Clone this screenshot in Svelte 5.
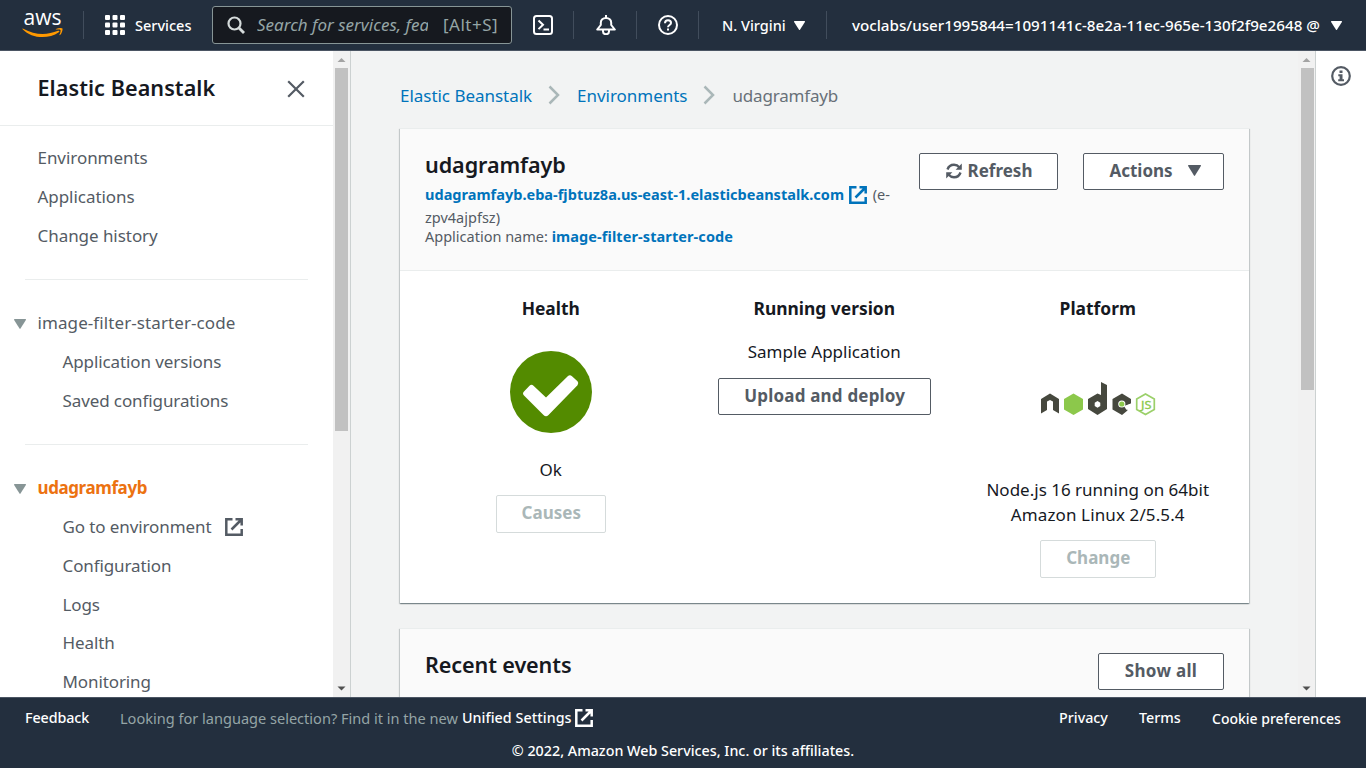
<script>
  const top = ['Environments', 'Applications', 'Change history'];
  const app = ['Application versions', 'Saved configurations'];
  const env = ['Configuration', 'Logs', 'Health', 'Monitoring'];
</script>

{#snippet external(size)}
  <svg class="ext" width={size} height={size} viewBox="0 0 18 18" fill="none" stroke="currentColor" stroke-width="2.500">
    <path d="M7.500 1.300H1.300v15.400h15.400v-5.700M10.500 1.300h6.200v6.200M16.500 1.500 6.500 11.500" />
  </svg>
{/snippet}

{#snippet scrollbar(thumb)}
  <div class="scroll">
    <svg width="17" height="17"><path d="M4.500 11 8.500 7l4 4z" fill="#a3a3a3" /></svg>
    <div class="thumb" style="height:{thumb}px"></div>
    <svg class="down" width="17" height="17"><path d="M4.500 6.500h8l-4 4z" fill="#505050" /></svg>
  </div>
{/snippet}

{#snippet caret(w, h)}
  <svg width={w} height={h} viewBox="0 0 12 10" preserveAspectRatio="none"><path d="M.5 0h11q.7.3.4 1L6.500 9.600q-.5.6-1 0L.1 1Q-.1.2.5 0z" fill="currentColor" /></svg>
{/snippet}

<div class="page">
  <header>
    <div class="aws">
      <span>aws</span>
      <svg width="41" height="11" viewBox="0 0 41 11">
        <path d="M.6 1.200Q0 .3 1.300.7C13 7.300 25 7.400 36 2.800c1.300-.5 2 .5.8 1.400C26 11.700 9.500 10.500.6 1.200z" fill="#f90" />
        <path d="M34 .9c2.500-1.200 6-1 6.400-.4.5.8-.2 4.700-2.300 6.500-.5.3-.8.1-.6-.4.700-1.700 1.400-4 .9-4.700s-2.700-.4-4.200-.3c-.6 0-.6-.4-.2-.7z" fill="#f90" />
      </svg>
    </div>
    <i class="sep s1"></i>
    <div class="services">
      <svg width="20" height="20" fill="#fff">
        {#each [0, 7.500, 15] as y}{#each [0, 7.500, 15] as x}<rect {x} {y} width="5" height="5" rx="1" />{/each}{/each}
      </svg>
      <span>Services</span>
    </div>
    <div class="search">
      <svg width="18" height="18" viewBox="0 0 18 18" fill="none" stroke="#d5dbdb"><circle cx="7.500" cy="7.500" r="6" stroke-width="2.200" /><path d="m12 12 5 5" stroke-width="2.800" /></svg>
      <span class="ph">Search for services, fea</span>
      <span class="key">[Alt+S]</span>
    </div>
    <div class="tool shell">
      <svg width="20" height="20" viewBox="0 0 20 20" fill="none" stroke="#fff" stroke-width="2"><rect x="1" y="1" width="18" height="18" rx="2.500" /><path d="m5.500 5.500 4.500 4.300-4.500 4.300M10.500 14.500h5.500" /></svg>
    </div>
    <i class="sep"></i>
    <div class="tool bell">
      <svg width="20" height="20" viewBox="0 0 20 20" fill="none" stroke="#fff" stroke-width="2" stroke-linejoin="round"><path d="M10 0v3M1.200 14.500 4.800 10V7.800C4.800 5 7 3 10 3s5.200 2 5.200 4.800V10l3.600 4.500zM7 15v1.500a3 2.700 0 0 0 6 0V15" /></svg>
    </div>
    <i class="sep"></i>
    <div class="tool help">
      <svg width="20" height="20" viewBox="0 0 20 20" fill="none" stroke="#fff" stroke-width="2"><circle cx="10" cy="10" r="9" /><path d="M7 8.200C7 6.300 8.200 5.300 10 5.300s3 1 3 2.700c0 2-3 2-3 4.300M10 13.500v2" /></svg>
    </div>
    <i class="sep"></i>
    <div class="region"><span>N. Virgini</span>{@render caret(11, 9)}</div>
    <i class="sep"></i>
    <div class="user"><span>voclabs/user1995844=1091141c-8e2a-11ec-965e-130f2f9e2648 @</span>{@render caret(11, 9)}</div>
  </header>

  <div class="body">
    <aside>
      <div class="nav">
        <div class="navhead">
          <h2>Elastic Beanstalk</h2>
          <svg width="18" height="18" stroke="#545b64" stroke-width="2.200"><path d="m1.200 1.200 15.600 15.600M16.800 1.200 1.200 16.800" /></svg>
        </div>
        <ul>{#each top as t}<li>{t}</li>{/each}</ul>
        <hr />
        <ul>
          <li class="group">{@render caret(12, 10)}<span class="wide">image-filter-starter-code</span></li>
          {#each app as t}<li class="sub">{t}</li>{/each}
        </ul>
        <hr />
        <ul>
          <li class="group">{@render caret(12, 10)}<span class="active">udagramfayb</span></li>
          <li class="sub">Go to environment {@render external(18)}</li>
          {#each env as t}<li class="sub">{t}</li>{/each}
        </ul>
      </div>
      {@render scrollbar(363)}
    </aside>

    <main>
      <div class="content">
        <nav class="crumbs">
          <span class="link">Elastic Beanstalk</span>
          <svg width="12" height="20" fill="none" stroke="#aab7b8" stroke-width="2.500"><path d="m1.500 1.500 8.500 8.500-8.500 8.500" /></svg>
          <span class="link">Environments</span>
          <svg width="12" height="20" fill="none" stroke="#aab7b8" stroke-width="2.500"><path d="m1.500 1.500 8.500 8.500-8.500 8.500" /></svg>
          <span class="here">udagramfayb</span>
        </nav>

        <section class="card">
          <div class="cardhead">
            <div class="info">
              <h2>udagramfayb</h2>
              <p class="url"><b>udagramfayb.eba-fjbtuz8a.us-east-1.elasticbeanstalk.com</b> <span class="blue">{@render external(18)}</span> (e-<br />zpv4ajpfsz)</p>
              <p class="appname">Application name: <b>image-filter-starter-code</b></p>
            </div>
            <div class="btns">
              <button class="refresh">
                <svg width="16" height="16" viewBox="0 0 16 16" fill="none" stroke="currentColor" stroke-width="2.400"><path d="M1.500 6.500C2.500 3.500 5 1.800 8 1.800c2.200 0 4 .9 5.500 2.700M14.500 9.500c-1 3-3.500 4.700-6.500 4.700-2.200 0-4-.9-5.500-2.700" /><path d="M15.800.5v6.200H9.600zM.2 15.500V9.300h6.200z" fill="currentColor" stroke="none" /></svg>
                Refresh
              </button>
              <button class="actions">Actions {@render caret(13, 11)}</button>
            </div>
          </div>
          <div class="cols">
            <div class="col">
              <h3>Health</h3>
              <svg class="ok" width="82" height="82" viewBox="0 0 82 82"><circle cx="41" cy="41" r="41" fill="#538b00" /><path d="M23.500 34.800 36 46.500 58 25q2-1.800 4 .2l5.500 5q1.800 2 0 4L38.500 64q-2.500 2.400-5 0L14 44.500q-2-2 0-4l5.500-5.700q2-1.900 4 0z" fill="#fff" /></svg>
              <p class="oktxt">Ok</p>
              <button class="off causes">Causes</button>
            </div>
            <div class="col">
              <h3>Running version</h3>
              <p class="sample">Sample Application</p>
              <button class="deploy">Upload and deploy</button>
            </div>
            <div class="col">
              <h3>Platform</h3>
              <svg class="node" width="116" height="34" viewBox="0 0 116 34">
                <g fill="#46483e">
                  <path d="M1 17 10 11.500 19 17v14.500L13 28v-8.500L10 18l-3 1.500V28l-6 3.500z" />
                  <path fill-rule="evenodd" d="M61 0l6 3v24l-9.500 6L48 27V17l9.500-5.500L61 13zM57.500 19 54.700 20.700v3.300l2.800 1.700 2.800-1.700v-3.300z" />
                  <path d="M82 11.500 91 17v4.500L86 24l1.500 4.500L82 33l-9.500-5.500V17z" />
                </g>
                <path d="m33.500 11.500 9.500 5.500v10.500L33.500 33 24 27.500V17z" fill="#8cc84b" />
                <path d="m84 24 7-2.500-4.500 6.500z" fill="#fff" />
                <circle cx="81.800" cy="22" r="3.600" fill="#fff" /><circle cx="81.800" cy="22" r="2.600" fill="#8cc84b" />
                <path d="m105.500 12 8.800 5v10.500l-8.800 5-8.800-5V17z" fill="none" stroke="#9bd06a" stroke-width="1.700" />
                <text x="101" y="26.500" fill="#8cc84b" stroke="#8cc84b" stroke-width=".3" font-size="11" textLength="10.500" lengthAdjust="spacingAndGlyphs">JS</text>
              </svg>
              <p class="plat">Node.js 16 running on 64bit<br /><span>Amazon Linux 2/5.5.4</span></p>
              <button class="off change">Change</button>
            </div>
          </div>
        </section>

        <section class="card second">
          <div class="eventhead"><h2>Recent events</h2><button class="showall">Show all</button></div>
        </section>
      </div>
      {@render scrollbar(322)}
    </main>

    <div class="rail">
      <svg width="20" height="20" viewBox="0 0 20 20"><circle cx="10" cy="10" r="8.800" fill="none" stroke="#545b64" stroke-width="2.200" /><path d="M8.500 4.500h3v2.600h-3zM7.300 8.300h4.200v5h1.500v2H7.200v-2h1.400v-3H7.300z" fill="#545b64" /></svg>
    </div>
  </div>

  <footer>
    <div class="frow">
      <span class="feedback">Feedback</span>
      <span class="look">Looking for language selection? Find it in the new</span>
      <span class="unified">Unified Settings</span>
      {@render external(18)}
      <span class="privacy">Privacy</span>
      <span class="terms">Terms</span>
      <span class="cookie">Cookie preferences</span>
    </div>
    <div class="copy">© 2022, Amazon Web Services, Inc. or its affiliates.</div>
  </footer>
</div>

<style>
  :global(body) { margin: 0; overflow: hidden; }
  * { box-sizing: border-box; }
  .page { display: flex; flex-direction: column; width: 1366px; height: 768px; overflow: hidden; font: 17px/24px "Noto Sans", sans-serif; color: #16191f; background: #fff; }
  svg { display: block; flex: none; }
  h2, h3, p, ul { margin: 0; padding: 0; }
  h2 { font-size: 21.6px; font-weight: 600; line-height: 28px; }
  h3 { font-size: 17.4px; font-weight: 700; line-height: 24px; }

  header { flex: none; height: 51px; display: flex; align-items: center; background: #232f3e; border-bottom: 1px solid #4b5563; color: #fff; font-size: 14.5px; white-space: nowrap; }
  header span, footer { font-weight: 500; }
  .aws { width: 41px; margin-left: 22px; display: flex; flex-direction: column; align-items: center; }
  .aws span { font: 500 21px/17px "Open Sans", sans-serif; height: 18px; margin-top: -2px; margin-bottom: 1px; }
  .sep { flex: none; width: 1px; height: 28px; background: #414d5c; }
  .s1 { margin-left: 20px; }
  .services { display: flex; align-items: center; gap: 10px; width: 128px; padding-left: 21px; }
  .search { display: flex; align-items: center; width: 300px; height: 38px; border: 1px solid #879596; border-radius: 3px; background: #16191f; padding-left: 14px; color: #95a5a6; font-size: 17px; }
  header .ph { font-style: italic; font-weight: 400; width: 171px; margin-left: 12px; overflow: hidden; }
  header .key { margin-left: 15px; letter-spacing: .5px; font-weight: 400; }
  .tool { width: 62px; display: grid; place-items: center; }
  .shell { width: 61px; }
  .bell { padding-left: 2px; }
  .help { width: 61px; }
  .region { display: flex; align-items: center; gap: 8px; width: 127px; padding-left: 23px; }
  .user { display: flex; align-items: center; gap: 11px; padding-left: 25px; font-size: 15.2px; }

  .body { flex: none; height: 646px; display: flex; overflow: hidden; }
  aside { width: 351px; display: flex; border-right: 1px solid #ccd1d1; }
  .nav { width: 333px; height: 646px; overflow: hidden; color: #545b64; }
  .navhead { display: flex; align-items: center; justify-content: space-between; height: 75px; padding: 0 28px 0 38px; border-bottom: 1px solid #eaeded; color: #16191f; margin-bottom: 13px; }
  .navhead h2 { margin-left: -.5px; letter-spacing: .05px; }
  .navhead svg { margin-top: 2px; }
  ul { list-style: none; }
  li { height: 38.85px; padding-left: 37.5px; display: flex; align-items: center; letter-spacing: -.05px; }
  hr { border: 0; border-top: 1px solid #eaeded; margin: 23.500px 25px 23.800px; }
  .group { padding-left: 14px; gap: 11.500px; }
  .group :global(svg) { color: #879596; margin-top: 1px; }
  .wide { letter-spacing: .09px; }
  .active { color: #ec7211; font-weight: 700; letter-spacing: -.4px; }
  .sub { padding-left: 62.500px; gap: 14px; letter-spacing: -.1px; }

  .scroll { flex: none; width: 17px; height: 646px; background: #f1f1f1; display: flex; flex-direction: column; }
  .thumb { width: 13px; margin: 0 2px; background: #c1c1c1; }
  main .thumb { margin-left: 3px; }
  .down { margin-top: auto; }

  main { flex: 1; display: flex; background: #f2f3f3; }
  .content { width: 947px; height: 646px; padding: 32px 49px 0; overflow: hidden; }
  .crumbs { display: flex; align-items: center; height: 25px; color: #687078; }
  .crumbs .link { color: #0073bb; letter-spacing: -.03px; }
  .crumbs svg { margin: -2px 17px 0 16px; }
  .crumbs .here { letter-spacing: -.17px; }
  .card { margin-top: 20px; height: 475px; background: #fff; border-top: 1px solid #eaeded; box-shadow: 0 1px 1px 0 rgba(0,28,36,.3), 1px 1px 1px 0 rgba(0,28,36,.15), -1px 1px 1px 0 rgba(0,28,36,.15); }
  .second { margin-top: 25px; height: 200px; background: #fafafa; }
  .cardhead { display: flex; justify-content: space-between; height: 142px; padding: 22px 25px 0; background: #fafafa; border-bottom: 1px solid #eaeded; }
  .info { color: #545b64; font-size: 14.5px; }
  .info h2 { color: #16191f; letter-spacing: -.1px; margin-bottom: 4px; }
  .info b { color: #0073bb; letter-spacing: .02px; }
  .url { line-height: 22.500px; white-space: nowrap; }
  .blue { display: inline-block; color: #0073bb; vertical-align: -4px; height: 18px; line-height: 0; margin: -4px 2px 0 1px; }
  .appname { line-height: 17px; }
  .appname b { letter-spacing: .09px; }
  .btns { display: flex; gap: 25px; padding-top: 2px; }
  button { flex: none; font: 700 17px/22px "Noto Sans", sans-serif; color: #545b64; background: #fff; border: 1px solid #545b64; border-radius: 2px; height: 37px; padding: 0 0 2px 1px; display: flex; align-items: center; justify-content: center; white-space: nowrap; }
  .refresh { width: 139px; gap: 6px; }
  .actions { width: 141px; gap: 15px; padding-left: 3px; }
  .off { color: #aab7b8; border-color: #d5dbdb; height: 38px; }
  .cols { display: grid; grid-template-columns: repeat(3, 273.500px); padding: 25px 14px 0; }
  .col { display: flex; flex-direction: column; align-items: center; text-align: center; }
  .ok { margin-top: 31px; }
  .oktxt { margin: 25px 0 13px; }
  .causes { width: 110px; }
  .sample { margin: 20px 0 14px; }
  .deploy { width: 213px; letter-spacing: .19px; }
  .node { margin-top: 62px; }
  .plat { line-height: 25px; margin: 61px 0 13px; white-space: nowrap; }
  .plat span { letter-spacing: .12px; }
  .change { width: 116px; }
  .eventhead { display: flex; justify-content: space-between; padding: 22px 25px 0; }
  .eventhead h2 { letter-spacing: -.12px; }
  .showall { width: 126px; margin-top: 2px; padding-left: 0; letter-spacing: .3px; }

  .rail { width: 51px; border-left: 1px solid #ccd1d1; background: #fff; padding: 15px 0 0 15px; }

  footer { height: 71px; flex: none; background: #232f3e; border-top: 1px solid #4b5563; color: #fff; font-size: 14.300px; line-height: 20px; }
  .frow { display: flex; align-items: center; height: 40px; padding-left: 25px; white-space: nowrap; }
  .feedback { width: 95px; letter-spacing: -.1px; }
  .look { color: #95a5a6; font-size: 14.560px; font-weight: 400; width: 342px; margin-top: -1px; }
  .unified { width: 113px; letter-spacing: .05px; }
  .privacy { margin-left: auto; width: 80px; }
  .terms { width: 73px; }
  .cookie { font-size: 14px; width: 154px; padding-top: 1px; }
  .copy { text-align: center; margin-top: 3px; }
</style>
